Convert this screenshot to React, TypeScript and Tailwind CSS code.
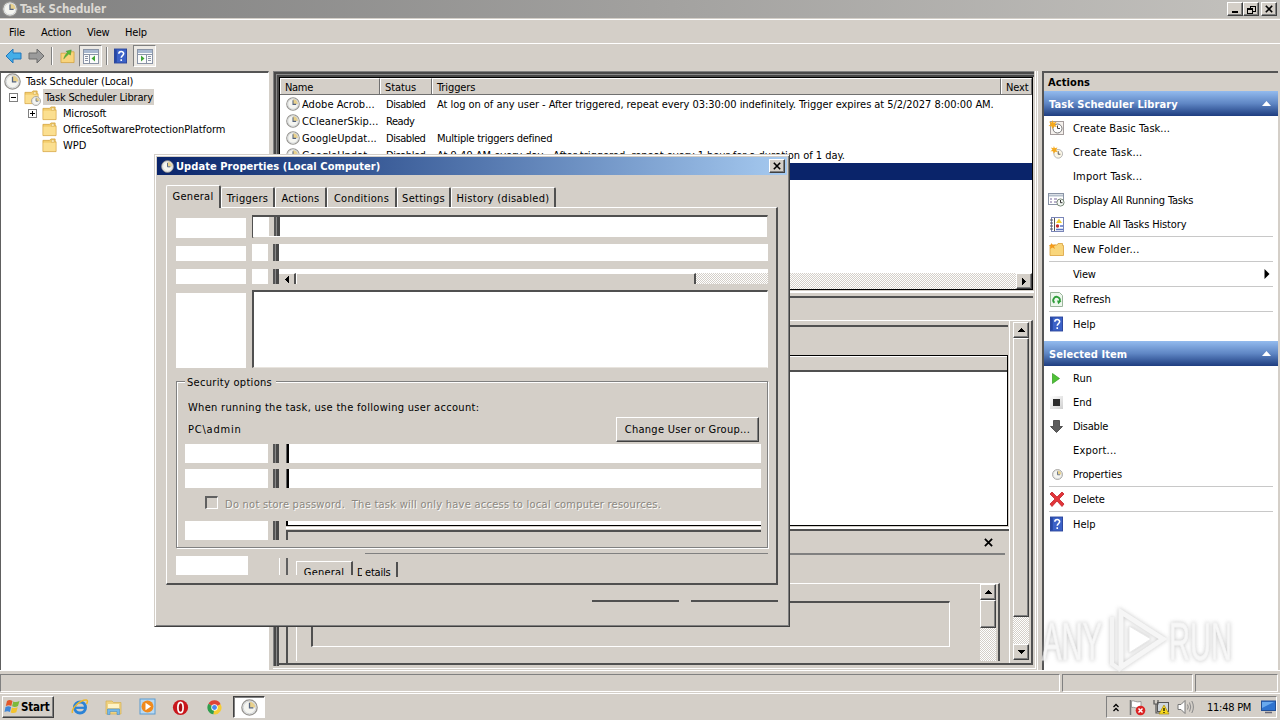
import React from "react";

type Kids = { children?: React.ReactNode; className?: string };

const CHECKER = "bg-[repeating-conic-gradient(#ffffff_0_25%,#d4cfc8_0_50%)] bg-[length:2px_2px]";
const RAISED = "border border-t-white border-l-white border-r-[#404040] border-b-[#404040] bg-[#d4cfc8] shadow-[inset_-1px_-1px_0_#808080]";

function Clock({ s = 14, className = "" }: { s?: number; className?: string }) {
  return (
    <svg width={s} height={s} viewBox="0 0 16 16" className={`shrink-0 ${className}`}>
      <circle cx="8" cy="8" r="7.2" fill="#f5f5f0" stroke="#94928e" strokeWidth="1.2" />
      <path d="M8 8V2.2A5.8 5.8 0 0 1 13.8 8Z" fill="#e9d18c" />
      <circle cx="8" cy="8" r="5.9" fill="none" stroke="#cfd2d6" strokeWidth="0.9" />
      <path d="M8 3.6V8.4H11.6" fill="none" stroke="#56657f" strokeWidth="1.2" />
    </svg>
  );
}

function Folder({ s = 15 }: { s?: number }) {
  return (
    <svg width={s} height={s} viewBox="0 0 16 16" className="shrink-0">
      <path d="M1 2.5H8L9.5 1H14V4H15V14.5H1Z" fill="#f3cd6c" stroke="#d3a23c" strokeWidth="0.8" />
      <path d="M1.5 5H14.5V14H1.5Z" fill="#fbdf90" />
      <path d="M10 2H13V4.5H10Z" fill="#fff3c8" stroke="#c99a3a" strokeWidth="0.5" />
    </svg>
  );
}

function Star() {
  return <path d="M4.5 0L5.6 2.7L8.6 1.8L7 4.5L8.8 7L5.8 6.5L4.3 9L3.5 6.2L0.5 6L2.8 4.2L1 1.6L3.8 2.6Z" fill="#f5a91c" />;
}

function HelpBook({ w = 14, h = 16 }: { w?: number; h?: number }) {
  return (
    <svg width={w} height={h} viewBox="0 0 14 16" className="shrink-0">
      <rect x="0.5" y="0.5" width="13" height="15" fill="#3c62c8" stroke="#27429a" />
      <rect x="1" y="1" width="2" height="14" fill="#2747a4" />
      <path d="M5.2 5.6C5.2 2.4 10.4 2.4 10.4 5.4C10.4 7.6 7.8 7.6 7.8 10M7.8 11.6V13.4" fill="none" stroke="#fff" strokeWidth="1.7" />
    </svg>
  );
}

function Panes({ flip }: { flip?: boolean }) {
  return (
    <svg width="16" height="15" viewBox="0 0 16 15" className="shrink-0">
      <rect x="0.5" y="0.5" width="15" height="14" fill="#fbfbfb" stroke="#8a94a6" />
      <rect x="1" y="1" width="14" height="3" fill="#a9b9d0" />
      <path d="M1 5.5H15" stroke="#8a94a6" />
      <g transform={flip ? "translate(16 0) scale(-1 1)" : undefined}>
        <path d="M6.5 5V14M2 7.5H5M2 9.5H5M2 11.5H5" stroke="#8a94a6" />
        <path d="M12 6.5V12.5L8.5 9.5Z" fill="#3fa535" />
      </g>
    </svg>
  );
}

function Arrow({ color, edge, flip }: { color: string; edge: string; flip?: boolean }) {
  return (
    <svg width="17" height="16" viewBox="0 0 17 16" className="shrink-0">
      <path d="M1 8L8 1V5H16V11H8V15Z" fill={color} stroke={edge} transform={flip ? "translate(17 0) scale(-1 1)" : undefined} />
    </svg>
  );
}

function Tri({ d, className = "" }: { d: "u" | "d" | "l" | "r"; className?: string }) {
  const p = { u: "M0 4H7L3.5 0Z", d: "M0 0H7L3.5 4Z", l: "M4 0V7L0 3.5Z", r: "M0 0V7L4 3.5Z" }[d];
  const v = d === "u" || d === "d";
  return (
    <svg width={v ? 7 : 4} height={v ? 4 : 7} shapeRendering="crispEdges" className={`shrink-0 ${className}`}>
      <path d={p} fill="currentColor" />
    </svg>
  );
}

function Cross({ s = 8 }: { s?: number }) {
  return (
    <svg width={s} height={s} viewBox="0 0 8 8" className="shrink-0">
      <path d="M0.8 0.8L7.2 7.2M7.2 0.8L0.8 7.2" stroke="#000" strokeWidth="1.6" />
    </svg>
  );
}

function CaptionButton({ children, className = "" }: Kids) {
  return <div className={`flex h-[14px] w-4 items-center justify-center ${RAISED} ${className}`}>{children}</div>;
}

function TitleBar() {
  return (
    <div className="flex h-[18px] shrink-0 items-center bg-linear-to-r from-[#808080] to-[#c4c2be] pl-0.5 pr-[3px]">
      <Clock s={16} />
      <span className="ml-0.5 flex-1 pt-[2px] text-[11.5px] font-bold tracking-[-0.12px] text-[#dcd9d3]">Task Scheduler</span>
      <CaptionButton><span className="mt-1.5 h-0.5 w-1.5 bg-black" /></CaptionButton>
      <CaptionButton>
        <svg width="9" height="9" viewBox="0 0 9 9" shapeRendering="crispEdges">
          <path d="M3 3V1H8V6H6M3 1.5H8" fill="none" stroke="#000" />
          <path d="M0.5 3.5H5.5V8.5H0.5ZM0 4.5H6" fill="none" stroke="#000" />
        </svg>
      </CaptionButton>
      <CaptionButton className="ml-0.5"><Cross s={8} /></CaptionButton>
    </div>
  );
}

function MenuBar() {
  return (
    <div className="mt-px flex h-[25px] shrink-0 items-center border-t border-b border-t-white border-b-white pt-[2px] pl-[9px]">
      <span className="w-8 tracking-[-0.1px]">File</span>
      <span className="w-[46px] tracking-[-0.1px]">Action</span>
      <span className="w-[38px] tracking-[-0.3px]">View</span>
      <span className="tracking-[-0.2px]">Help</span>
    </div>
  );
}

function ToolBar() {
  return (
    <div className="flex h-6 shrink-0 items-center pl-[5px]">
      <Arrow color="#45aee8" edge="#2277bb" />
      <span className="w-1.5" />
      <Arrow color="#9b9b9b" edge="#6c6c6c" flip />
      <span className="ml-[6px] mr-[7px] h-[18px] w-0.5 border-l border-r border-l-[#808080] border-r-white" />
      <svg width="15" height="16" viewBox="0 0 16 16" className="shrink-0">
        <path d="M1 5H8L9.5 3.5H15V15H1Z" fill="#f8d47c" stroke="#d3a23c" strokeWidth="0.8" />
        <path d="M4 11C5 8 6 6 8 4.5L6.500 3L12 1.500L11 7L9.500 5.700C8 7 6 9 4 11Z" fill="#54b83a" stroke="#2f8a22" strokeWidth="0.5" />
      </svg>
      <div className="ml-1 flex h-[22px] w-[23px] items-center justify-center border border-[#808080] border-r-white border-b-white bg-[#ece9e4]"><Panes /></div>
      <span className="ml-1 mr-[6px] h-[18px] w-0.5 border-l border-r border-l-[#808080] border-r-white" />
      <HelpBook w={13} h={16} />
      <div className="ml-[6px] flex h-[22px] w-[23px] items-center justify-center border border-[#808080] border-r-white border-b-white bg-[#ece9e4]"><Panes flip /></div>
    </div>
  );
}

function Expander({ open }: { open?: boolean }) {
  return (
    <svg width="9" height="9" viewBox="0 0 9 9" shapeRendering="crispEdges" className="shrink-0">
      <rect x="0.5" y="0.5" width="8" height="8" fill="#fff" stroke="#808080" />
      <path d={open ? "M2 4.5H7" : "M2 4.5H7M4.5 2V7"} stroke="#000" />
    </svg>
  );
}

function Tree() {
  return (
    <div className="flex w-[269px] flex-col border-t-2 border-r border-l border-t-[#555] border-r-white border-l-[#606060] bg-white">
      <div className="flex h-4 items-center pl-[3px]"><Clock s={17} /><span className="ml-[5px] tracking-[-0.14px]">Task Scheduler (Local)</span></div>
      <div className="flex h-4 items-center pl-2">
        <Expander open />
        <div className="relative ml-[6px] mr-[3px] flex"><Folder /><Clock s={10} className="absolute top-[6px] left-[7px]" /></div>
        <span className="ml-px flex h-4 w-[111px] items-center bg-[#d4cfc8] pl-[2px] tracking-[-0.17px]">Task Scheduler Library</span>
      </div>
      <div className="flex h-4 items-center pl-[27px]"><Expander /><span className="w-[5px]" /><Folder /><span className="ml-[6px] tracking-[-0.2px]">Microsoft</span></div>
      <div className="flex h-4 items-center pl-[41px]"><Folder /><span className="ml-[6px] tracking-[-0.06px]">OfficeSoftwareProtectionPlatform</span></div>
      <div className="flex h-4 items-center pl-[41px]"><Folder /><span className="ml-[6px]">WPD</span></div>
    </div>
  );
}

function Row({ name, status, trig, tw = "" }: { name: string; status: string; trig?: string; tw?: string }) {
  return (
    <div className="flex h-[17px] shrink-0 items-center pt-px pl-[6px]">
      <Clock s={14} />
      <span className="ml-[2px] w-[84px] pt-px tracking-[0.05px]">{name}</span>
      <span className="w-[51px] pt-px tracking-[-0.45px]">{status}</span>
      <span className={`pt-px ${tw}`}>{trig}</span>
    </div>
  );
}

function HeadCell({ children, className = "" }: Kids) {
  return <div className={`flex items-center border-t border-r border-b border-t-white border-r-[#707070] border-b-[#707070] pt-px pl-[5px] shadow-[inset_1px_0_0_#fff] ${className}`}>{children}</div>;
}

function ScrollButton({ d }: { d: "u" | "d" | "l" | "r" }) {
  return <div className={`flex h-4 w-4 shrink-0 items-center justify-center ${RAISED}`}><Tri d={d} /></div>;
}

function TaskList() {
  return (
    <div className="flex h-[213px] w-[754px] shrink-0 flex-col border border-black bg-white">
      <div className="flex h-[17px] shrink-0 bg-[#d4cfc8]">
        <HeadCell className="w-[100px] tracking-[-0.3px]">Name</HeadCell>
        <HeadCell className="w-[52px] tracking-[-0.1px]">Status</HeadCell>
        <HeadCell className="w-[569px] tracking-[-0.1px]">Triggers</HeadCell>
        <HeadCell className="flex-1 tracking-[-0.1px]">Next</HeadCell>
      </div>
      <Row name="Adobe Acrob..." status="Disabled" trig="At log on of any user - After triggered, repeat every 03:30:00 indefinitely. Trigger expires at 5/2/2027 8:00:00 AM." tw="tracking-[-0.045px]" />
      <Row name="CCleanerSkip..." status="Ready" />
      <Row name="GoogleUpdat..." status="Disabled" trig="Multiple triggers defined" tw="tracking-[-0.25px]" />
      <Row name="GoogleUpdat..." status="Disabled" trig="At 9:49 AM every day - After triggered, repeat every 1 hour for a duration of 1 day." tw="tracking-[-0.02px]" />
      <div className="h-[17px] shrink-0 bg-[#0a246a]" />
      <div className="flex-1" />
      <div className={`flex h-4 justify-between ${CHECKER}`}><ScrollButton d="l" /><ScrollButton d="r" /></div>
    </div>
  );
}

function Details() {
  return (
    <div className="flex flex-1 flex-col">
      <div className="mt-px h-[5px] border-t-2 border-white" />
      <div className="h-6 w-[754px] border-t-2 border-[#505050]" />
      <div className="flex h-[345px] w-[754px] border-t border-r-2 border-b-2 border-t-white border-r-[#505050] border-b-[#505050]">
        <div className="flex w-[730px] flex-col pt-[4px] pl-[7px]">
          <div className="flex h-[202px] w-[722px] shrink-0 flex-col border-t-2 border-l-2 border-[#505050] pt-7">
            <div className="flex h-[171px] w-[720px] flex-col border border-black bg-white">
              <div className="h-[16px] border-t border-b-2 border-t-white border-b-[#505050] bg-[#d4cfc8]" />
            </div>
          </div>
          <div className="h-[2px] shrink-0 border-t-2 border-white" />
          <div className="flex flex-1 flex-col border-t-2 border-l-2 border-[#505050] pr-[4px]">
            <div className="flex h-[22px] shrink-0 items-center justify-end pr-3"><Cross s={9} /></div>
            <div className="h-[30px] shrink-0 border-t-2 border-[#808080]" />
            <div className="mr-[5px] mb-[2px] ml-[8px] flex flex-1 justify-between border-t border-r-2 border-l border-t-white border-r-[#505050] border-l-white">
              <div className="mt-[17px] ml-[14px] h-[46px] w-[639px] border-t-2 border-r border-b border-l-2 border-t-[#505050] border-r-white border-b-white border-l-[#505050]" />
              <div className={`mr-[2px] flex w-4 flex-col ${CHECKER}`}><ScrollButton d="u" /><div className={`h-[28px] ${RAISED}`} /></div>
            </div>
          </div>
        </div>
        <div className="flex flex-1 justify-end border-l border-white pr-[2px] pb-[3px] pt-px">
          <div className={`flex w-4 flex-col ${CHECKER}`}>
            <ScrollButton d="u" />
            <div className={`h-[279px] ${RAISED}`} />
            <div className="flex-1" />
            <ScrollButton d="d" />
          </div>
        </div>
      </div>
    </div>
  );
}

function Middle() {
  return (
    <div className="ml-[4px] flex h-[600px] w-[765px] border-r border-b border-white">
      <div className="flex flex-1 border-r border-b border-r-[#d4cfc8] border-b-[#d4cfc8]">
        <div className="flex flex-1 border-r border-b border-white">
          <div className="mb-[2px] flex w-[761px] border-t border-l border-[#808080]">
            <div className="flex flex-1 border-t-2 border-l-2 border-[#484848]">
              <div className="flex flex-1 border-t border-l border-[#8a8a8a]">
                <div className="flex flex-1 flex-col border-t-2 border-l-2 border-[#484848]">
                  <TaskList />
                  <Details />
                </div>
              </div>
            </div>
          </div>
        </div>
      </div>
    </div>
  );
}

function PaneHeader({ children }: Kids) {
  return (
    <div className="flex h-[25px] shrink-0 items-center justify-between bg-linear-to-b from-[#93bbee] via-[#5f86c4] to-[#1f3d80] pr-[7px] pl-[5px] text-[11px] font-bold tracking-[0.08px] text-white">
      <span className="pt-px">{children}</span>
      <svg width="9" height="5"><path d="M0 5H9L4.5 0Z" fill="#fff" /></svg>
    </div>
  );
}

function Item({ icon, children, className = "", sep }: { icon?: React.ReactNode; sep?: boolean } & Kids) {
  return (
    <>
      <div className="flex h-6 shrink-0 items-center pl-[4px]">
        <span className="flex w-[17px] justify-center">{icon}</span>
        <span className={`ml-[8px] flex-1 ${className}`}>{children}</span>
        {children === "View" && (
          <svg width="6" height="10" className="mr-[8px]"><path d="M0.500 0L5.500 5L0.500 10Z" fill="#000" /></svg>
        )}
      </div>
      {sep && <div className="mr-[5px] ml-[5px] h-px shrink-0 bg-[#c8c8c8]" />}
    </>
  );
}

function Actions() {
  return (
    <div className="ml-[4px] flex w-[236px] flex-col border-t-2 border-l-2 border-[#555] bg-white">
      <div className="flex h-[18px] shrink-0 items-center bg-[#d4cfc8] pl-1 text-[11px] font-bold tracking-[0.1px]">Actions</div>
      <PaneHeader>Task Scheduler Library</PaneHeader>
      <Item className="tracking-[0.05px]" icon={
        <svg width="17" height="16" viewBox="0 0 17 16">
          <rect x="2.5" y="1.5" width="13" height="13" fill="#f4f0ec" stroke="#a49c9c" />
          <circle cx="9.5" cy="8.5" r="4.5" fill="#fff" stroke="#777" /><path d="M9.5 5.5V8.5H12" fill="none" stroke="#444" /><Star />
        </svg>}>Create Basic Task...</Item>
      <Item className="tracking-[0.2px]" icon={
        <svg width="13" height="13" viewBox="0 0 15 15">
          <circle cx="9.5" cy="9" r="5" fill="#fbf6e6" stroke="#aaa" /><path d="M9.5 6V9.5H12" fill="none" stroke="#444" /><Star />
        </svg>}>Create Task...</Item>
      <Item className="tracking-[0.2px]">Import Task...</Item>
      <Item className="tracking-[-0.19px]" icon={
        <svg width="17" height="14" viewBox="0 0 17 14">
          <rect x="0.5" y="0.5" width="15" height="11" fill="#fff" stroke="#8a94a6" /><path d="M1 2.5H15" stroke="#b4bfcb" strokeWidth="2" />
          <path d="M2 6H4M6 6H9M2 9H4M6 9H9" stroke="#769" /><circle cx="12.5" cy="9.5" r="3.6" fill="#f4f8f4" stroke="#7a8a7a" /><path d="M12.5 7V9.7H14.5" fill="none" stroke="#333" />
        </svg>}>Display All Running Tasks</Item>
      <Item sep className="tracking-[-0.15px]" icon={
        <svg width="14" height="15" viewBox="0 0 14 15">
          <rect x="1.5" y="0.5" width="12" height="14" fill="#fff" stroke="#7a86b8" /><path d="M0 3H3M0 6H3M0 9H3M0 12H3M4.500 1V14" stroke="#555" />
          <path d="M9 1.500L12 6H6Z" fill="#f2cf2e" /><circle cx="7.500" cy="9" r="1.700" fill="#c42a2a" /><path d="M10 9H13M6 12.500H13" stroke="#5a73c4" strokeWidth="1.500" />
        </svg>}>Enable All Tasks History</Item>
      <Item sep className="tracking-[0.22px]" icon={
        <svg width="15" height="14" viewBox="0 0 15 14">
          <path d="M1 3H8L9 1.500H13.500V3.500H14.500V13.500H1Z" fill="#f9d67c" stroke="#d9a13c" strokeWidth="0.8" /><path d="M2 1L4 3L7 2.500L5 4.500L6 7L3.500 5.500L1 7L1.500 4.500L0 3L2 3Z" fill="#f39a1c" />
        </svg>}>New Folder...</Item>
      <Item sep className="tracking-[-0.2px]">View</Item>
      <Item sep className="tracking-[0.1px]" icon={
        <svg width="13" height="15" viewBox="0 0 13 15">
          <path d="M0.500 0.500H9.500L12.500 3.500V14.500H0.500Z" fill="#eef7ee" stroke="#9ab49a" />
          <path d="M4.500 10.800A3.300 3.300 0 1 1 9.600 9.500" fill="none" stroke="#2f9e3a" strokeWidth="1.800" /><path d="M11.500 9L8.300 12.300L7 8.500Z" fill="#2f9e3a" />
        </svg>}>Refresh</Item>
      <Item icon={<HelpBook w={13} h={16} />}>Help</Item>
      <div className="h-[5px] shrink-0" />
      <PaneHeader>Selected Item</PaneHeader>
      <Item icon={<svg width="8" height="11" className="mr-px"><path d="M0.500 0.500L7.500 5.500L0.500 10.500Z" fill="#4fc236" stroke="#2f9a1e" strokeWidth="0.7" /></svg>}>Run</Item>
      <Item icon={<span className="flex h-[13px] w-[13px] items-center justify-center bg-linear-to-br from-white to-[#cfcfcf]"><span className="h-[7px] w-[7px] bg-[#2b2b2b]" /></span>}>End</Item>
      <Item className="tracking-[-0.25px]" icon={<svg width="13" height="13"><path d="M3.500 0.500H9.500V6.500H12.500L6.500 12.500L0.500 6.500H3.500Z" fill="#5c5c5c" stroke="#3c3c3c" strokeWidth="0.8" /></svg>}>Disable</Item>
      <Item className="tracking-[0.2px]">Export...</Item>
      <Item sep className="tracking-[-0.1px]" icon={<Clock s={11} className="ml-0.5" />}>Properties</Item>
      <Item sep className="tracking-[-0.15px]" icon={<svg width="16" height="16"><path d="M1 3L3 1L8 6L13 1L15 3L10 8L15 13L13 15.500L8 10L3 15.500L1 13L6 8Z" fill="#e2353a" stroke="#c22228" strokeWidth="0.8" /></svg>}>Delete</Item>
      <Item icon={<HelpBook w={13} h={16} />}>Help</Item>
    </div>
  );
}

/* Unpainted areas of the dialog show the window below through them. */
function Ghost({ inner, className = "", children }: { inner?: boolean } & Kids) {
  return (
    <div className={`flex flex-1 bg-white ${className}`}>
      <div className={inner ? "w-[83px]" : "w-[16px]"} />
      <div className="w-[5px] bg-[#d4cfc8]" />
      <div className="w-0.5 bg-[#555]" /><div className="w-px bg-[#8a8a8a]" /><div className="w-[3px] bg-[#484848]" />
      {inner && <><div className="w-[7px] bg-[#d4cfc8]" /><div className="w-px bg-[#606060]" /><div className="w-[2px] bg-black" /></>}
      <div className="flex flex-1 flex-col">{children}</div>
    </div>
  );
}

function Tab({ children, className = "" }: Kids) {
  return <div className={`flex h-[20px] items-center justify-center rounded-t-[2px] border-t border-r-2 border-l border-t-white border-r-[#505050] border-l-white bg-[#d4cfc8] pt-px ${className}`}>{children}</div>;
}

function Dialog() {
  return (
    <div className="absolute top-[154px] left-[154px] flex h-[473px] w-[636px] flex-col border border-t-[#d4cfc8] border-r-[#404040] border-b-[#404040] border-l-[#d4cfc8] bg-[#d4cfc8] p-[2px] shadow-[inset_1px_1px_0_#fff,inset_-1px_-1px_0_#808080]">
      <div className="flex h-[18px] shrink-0 items-center bg-linear-to-r from-[#0a246a] to-[#a6caf0] pr-[2px] pl-[4px]">
        <Clock s={13} />
        <span className="ml-[2px] flex-1 text-[11px] font-bold tracking-[0.07px] text-white">Update Properties (Local Computer)</span>
        <CaptionButton><Cross s={8} /></CaptionButton>
      </div>
      <div className="mt-[10px] ml-[9px] flex h-[22px] shrink-0 items-end tracking-[0.28px]">
        <Tab className="relative z-10 -mb-px h-[23px] w-[55px] pb-[2px]">General</Tab>
        <Tab className="w-[54px]">Triggers</Tab>
        <Tab className="w-[52px]">Actions</Tab>
        <Tab className="w-[70px]">Conditions</Tab>
        <Tab className="w-[54px]">Settings</Tab>
        <Tab className="w-[105px]">History (disabled)</Tab>
      </div>
      <div className="ml-[9px] flex h-[378px] w-[612px] shrink-0 flex-col border-t border-r-2 border-b-2 border-l border-t-white border-r-[#505050] border-b-[#505050] border-l-white pr-[8px] pl-[9px]">
        <div className="mt-[7px] flex h-[23px] shrink-0">
          <div className="mt-[3px] w-[70px] bg-white" />
          <div className="ml-[6px] flex flex-1 border-t-2 border-r border-b border-l-2 border-t-[#505050] border-r-[#d4cfc8] border-b-[#d4cfc8] border-l-[#505050]"><Ghost className="-ml-px border-r border-b border-white" /></div>
        </div>
        <div className="mt-[6px] flex h-[17px] shrink-0">
          <div className="mt-[2px] w-[70px] bg-white" />
          <div className="ml-[6px] flex flex-1"><Ghost /></div>
        </div>
        <div className="mt-[8px] flex h-[15px] shrink-0">
          <div className="w-[70px] bg-white" />
          <div className="ml-[6px] flex flex-1">
            <Ghost>
              <div className={`mt-[4px] flex flex-1 ${CHECKER}`}>
                <div className="flex w-[17px] items-center justify-center border-t border-r-2 border-t-white border-r-[#505050] bg-[#d4cfc8]"><Tri d="l" /></div>
                <div className="w-[400px] border-t border-r-2 border-l border-t-white border-r-[#505050] border-l-white bg-[#d4cfc8]" />
              </div>
            </Ghost>
          </div>
        </div>
        <div className="mt-[6px] flex h-[78px] shrink-0">
          <div className="mt-[3px] w-[70px] bg-white" />
          <div className="ml-[6px] flex-1 border-t-2 border-r border-b border-l-2 border-t-[#505050] border-r-white border-b-[#e8e4de] border-l-[#505050] bg-white" />
        </div>
        <div className="mt-[13px] flex h-[167px] shrink-0 flex-col border border-[#808080] pr-[6px] pl-[8px] shadow-[inset_1px_1px_0_#fff,1px_1px_0_#fff]">
          <span className="-mt-2 w-[91px] bg-[#d4cfc8] pt-px pl-[2px] leading-4 tracking-[0.3px]">Security options</span>
          <span className="mt-[9px] pl-[3px] leading-4 tracking-[0.31px]">When running the task, use the following user account:</span>
          <div className="flex h-[26px] items-center justify-between pl-[3px]">
            <span className="tracking-[0.8px]">PC\admin</span>
            <div className={`mr-[2px] flex h-[25px] w-[143px] items-center justify-center tracking-[0.25px] ${RAISED}`}>Change User or Group...</div>
          </div>
          <div className="mt-[2px] flex h-[19px] shrink-0"><Ghost inner /></div>
          <div className="mt-[6px] flex h-[19px] shrink-0"><Ghost inner /></div>
          <div className="flex h-[33px] shrink-0 items-center pl-[20px]">
            <span className="-mt-1 h-[13px] w-[13px] border-t-2 border-r border-b border-l-2 border-t-[#606060] border-r-white border-b-white border-l-[#606060]" />
            <span className="ml-[7px] whitespace-pre text-[#8b8780] tracking-[0.255px] [text-shadow:1px_1px_0_#fff]">Do not store password.  The task will only have access to local computer resources.</span>
          </div>
          <div className="flex h-[19px] shrink-0">
            <div className="w-[83px] bg-white" /><div className="w-[5px]" />
            <div className="w-0.5 bg-[#555]" /><div className="w-px bg-[#8a8a8a]" /><div className="w-[3px] bg-[#484848]" />
            <div className="w-[7px]" />
            <div className="flex flex-1 flex-col">
              <div className="h-[5px] border-b border-l-2 border-black bg-white" />
              <div className="mt-px h-[2px] bg-white" />
              <div className="mt-px flex-1 border-t-2 border-l-2 border-[#505050]" />
            </div>
          </div>
        </div>
        <div className="mt-[5px] flex h-[22px] shrink-0">
          <div className="mt-[3px] h-[19px] w-[72px] bg-white" />
          <div className="mt-[5px] ml-[31px] w-[9px] border-r-2 border-l border-r-[#606060] border-l-white" />
          <div className="mt-[8px] ml-[8px] flex h-[14px] w-[57px] justify-center overflow-hidden border-t border-r-2 border-l border-t-white border-r-[#505050] border-l-white leading-[21px] tracking-[0.2px]">General</div>
          <div className="mt-[9px] flex h-[15px] w-[45px] shrink-0 overflow-hidden border-r-2 border-[#505050] pl-[4px] leading-[21px]"><span className="w-[5px] overflow-hidden">D</span><span className="ml-[3px] tracking-[-0.2px]">etails</span></div>
          <div className="-ml-[33px] h-px flex-1 bg-[#808080]" />
        </div>
      </div>
      <div className="mt-[15px] mr-[9px] flex justify-end gap-3">
        <div className="h-0.5 w-[87px] bg-[#505050]" />
        <div className="h-0.5 w-[87px] bg-[#505050]" />
      </div>
    </div>
  );
}

function StatusBar() {
  return (
    <div className="mt-[3px] flex h-[18px] shrink-0 gap-[2px] pr-[2px]">
      <div className="w-[1060px] border border-[#808080] border-r-white border-b-white" />
      <div className="w-[131px] border border-[#808080] border-r-white border-b-white" />
      <div className="flex-1 border border-[#808080] border-r-white border-b-white" />
    </div>
  );
}

function TaskBar() {
  return (
    <div className="mt-px flex h-[27px] shrink-0 items-start border-t border-white pt-[2px] pl-[2px] pr-[3px]">
      <div className={`flex h-[22px] w-[52px] items-center pl-[1px] ${RAISED}`}>
        <svg width="17" height="16" viewBox="0 0 17 16">
          <path d="M3 2C5 0.500 6.500 0.800 8.500 2L7.300 7C5.500 5.800 4 6 1.800 7Z" fill="#e2572b" />
          <path d="M9.300 2.400C11 3.400 13 3.200 15.500 2L14 7C12 8.200 10 8.200 8.100 7.300Z" fill="#7db93b" />
          <path d="M1.500 8C3.500 7 5.200 6.900 7.100 8L6 13C4.200 12 2.500 12 0.500 13Z" fill="#3f86d8" />
          <path d="M7.900 8.400C9.800 9.300 11.500 9.200 13.700 8.200L12.300 13.200C10.500 14.300 8.500 14.200 6.700 13.400Z" fill="#f3c32e" />
        </svg>
        <span className="pt-[2px] text-[11.5px] font-bold tracking-[-0.2px]">Start</span>
      </div>
      <svg width="18" height="18" viewBox="0 0 18 18" className="mt-[2px] ml-[17px]">
        <circle cx="9" cy="9.500" r="5.500" fill="none" stroke="#2b83d6" strokeWidth="3" /><path d="M5 9.800H14" stroke="#2b83d6" strokeWidth="2.200" />
        <path d="M1.500 15C0 11 9 1.500 15.500 2C17 2.300 16.500 4.500 15.500 6" fill="none" stroke="#edb82c" strokeWidth="1.500" />
      </svg>
      <svg width="17" height="17" viewBox="0 0 17 17" className="mt-[3px] ml-[16px]">
        <path d="M1 2H7L8.500 3.500H16V15H1Z" fill="#efd281" stroke="#d4b050" strokeWidth="0.700" /><path d="M3 5H14V9H3Z" fill="#fff4c6" />
        <path d="M2.500 15.500V10H14.500V15.500H12V12.500H5V15.500Z" fill="#76b9e8" stroke="#4d8fc2" strokeWidth="0.600" />
      </svg>
      <svg width="17" height="17" viewBox="0 0 17 17" className="mt-[2px] ml-[17px]">
        <rect x="1" y="1" width="15" height="15" fill="#b9d9f2" stroke="#5b9bd0" /><circle cx="8.500" cy="8.500" r="6" fill="#f08a1d" /><path d="M6.500 4.800L12 8.500L6.500 12.200Z" fill="#fff" />
      </svg>
      <svg width="17" height="17" viewBox="0 0 17 17" className="mt-[3px] ml-[16px]">
        <circle cx="8.500" cy="8.500" r="7.600" fill="#c9161c" /><ellipse cx="8.500" cy="8.500" rx="2.600" ry="5.200" fill="#a80f14" stroke="#fff" strokeWidth="1.700" />
      </svg>
      <svg width="15" height="15" viewBox="0 0 16 16" className="mt-[4px] ml-[18px]">
        <path d="M8 8L1.600 4A7.300 7.300 0 0 1 14.500 4.500Z" fill="#de4336" /><path d="M8 8L1.600 4A7.300 7.300 0 0 0 7 15.300Z" fill="#2f9e4c" /><path d="M8 8L14.500 4.500A7.300 7.300 0 0 1 7 15.300Z" fill="#f6cd35" />
        <circle cx="8" cy="8" r="3.400" fill="#fff" /><circle cx="8" cy="8" r="2.600" fill="#4a88ee" />
      </svg>
      <div className="ml-[11px] flex h-[22px] w-[32px] items-center justify-center border border-[#404040] border-r-white border-b-white bg-white shadow-[inset_1px_1px_0_#808080]"><Clock s={17} /></div>
      <div className="flex-1" />
      <div className="flex h-[22px] w-[171px] items-center border border-[#808080] border-r-white border-b-white pl-[6px]">
        <svg width="6" height="9" viewBox="0 0 6 9"><path d="M0.500 4L3 1.500L5.500 4M0.500 8L3 5.500L5.500 8" fill="none" stroke="#000" strokeWidth="1.300" /></svg>
        <svg width="17" height="17" viewBox="0 0 17 17" className="ml-[10px]">
          <path d="M1.500 1V16" stroke="#777" strokeWidth="1.500" /><path d="M2.500 2C5 1 7 4 12 2.500V9C7 10 5 7.500 2.500 8.500Z" fill="#fff" stroke="#888" strokeWidth="0.800" />
          <circle cx="11.500" cy="11.500" r="4.800" fill="#db2323" /><path d="M9.500 9.500L13.500 13.500M13.500 9.500L9.500 13.500" stroke="#fff" strokeWidth="1.500" />
        </svg>
        <svg width="17" height="16" viewBox="0 0 17 16" className="ml-[7px]">
          <rect x="4.500" y="3.500" width="11" height="9" fill="#cfd6dc" stroke="#555" /><path d="M1 1V5H5V1M3 5V14H10" fill="none" stroke="#555" strokeWidth="1.200" />
          <path d="M11 6L16 15H6Z" fill="#f8d91d" stroke="#a88a10" strokeWidth="0.700" /><path d="M11 9V12M11 13V14" stroke="#000" strokeWidth="1.200" />
        </svg>
        <svg width="18" height="16" viewBox="0 0 18 16" className="ml-[7px]">
          <path d="M1 5.500H4L8 1.500V14.500L4 10.500H1Z" fill="#fff" stroke="#777" /><path d="M10.500 5.500Q12 8 10.500 10.500M12.500 3.500Q15 8 12.500 12.500M14.800 2Q18 8 14.800 14" fill="none" stroke="#888" />
        </svg>
        <span className="ml-[12px] w-[46px] whitespace-nowrap tracking-[-0.25px]">11:48 PM</span>
        <svg width="15" height="14" viewBox="0 0 15 14" className="ml-[8px]"><rect x="0.500" y="1" width="14" height="9.500" fill="#2f73cf" stroke="#224f96" /><path d="M1 2H13L1 8Z" fill="#69a9ee" /><path d="M4 12.500H11" stroke="#667" strokeWidth="1.500" /></svg>
      </div>
    </div>
  );
}

function Watermark() {
  return (
    <svg width="200" height="68" viewBox="0 0 200 68" className="absolute top-[606px] left-[1038px] opacity-80 drop-shadow-[0_0_2px_#b8b8b8]">
      <g fill="#f6f6f6" stroke="#f0f0f0" strokeWidth="1" fontFamily="Liberation Sans" fontSize="53">
        <text x="4" y="54" textLength="60" lengthAdjust="spacingAndGlyphs">ANY</text>
        <text x="131" y="54" textLength="63" lengthAdjust="spacingAndGlyphs">RUN</text>
      </g>
      <path d="M83 6L125 33L83 61Z" fill="none" stroke="#f4f4f4" strokeWidth="5" />
      <path d="M91 20L113 33L91 47Z" fill="#fff" stroke="#e4e4e4" />
      <path d="M74 11V58L83 64" fill="none" stroke="#f2f2f2" strokeWidth="4" />
    </svg>
  );
}

export default function App() {
  return (
    <div className="relative flex h-[720px] w-[1280px] flex-col overflow-hidden bg-[#d4cfc8] font-['DejaVu_Sans_Condensed','DejaVu_Sans',sans-serif] text-[11px] leading-none whitespace-nowrap text-black">
      <TitleBar />
      <MenuBar />
      <ToolBar />
      <div className="mt-[3px] flex h-[600px] shrink-0 border-b border-white">
        <Tree />
        <Middle />
        <Actions />
      </div>
      <StatusBar />
      <TaskBar />
      <Dialog />
      <Watermark />
    </div>
  );
}
